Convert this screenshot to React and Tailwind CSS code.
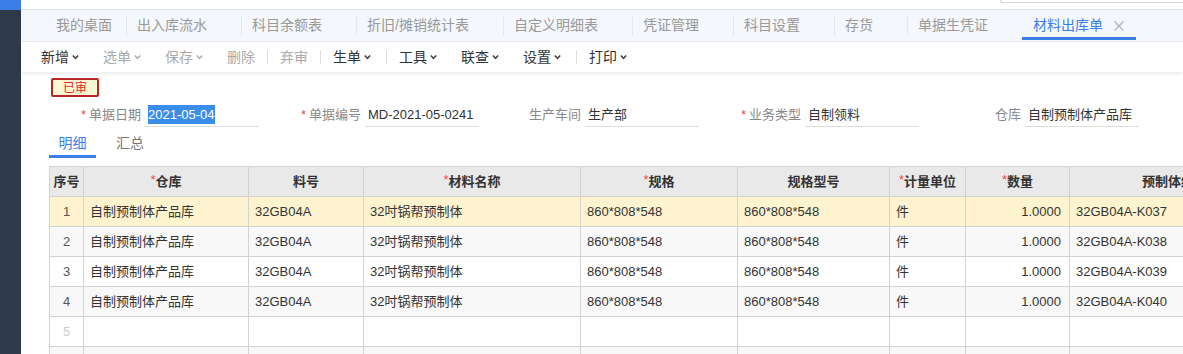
const tabs = [
  { name: '我的桌面', home: true },
  { name: '出入库流水' },
  { name: '科目余额表' },
  { name: '折旧/摊销统计表' },
  { name: '自定义明细表' },
  { name: '凭证管理' },
  { name: '科目设置' },
  { name: '存货' },
  { name: '单据生凭证' },
  { name: '材料出库单', active: true },
];

// sep: a | divider after the item
const tools = [
  { name: '新增', menu: true },
  { name: '选单', menu: true, off: true },
  { name: '保存', menu: true, off: true },
  { name: '删除', off: true, sep: true },
  { name: '弃审', off: true, sep: true },
  { name: '生单', menu: true, sep: true },
  { name: '工具', menu: true },
  { name: '联查', menu: true },
  { name: '设置', menu: true, sep: true },
  { name: '打印', menu: true },
];

const fields = [
  { label: '单据日期', value: '2021-05-04', req: true, selected: true },
  { label: '单据编号', value: 'MD-2021-05-0241', req: true },
  { label: '生产车间', value: '生产部' },
  { label: '业务类型', value: '自制领料', req: true },
  { label: '仓库', value: '自制预制体产品库' },
];

const cols = [
  { title: '序号', w: 34 },
  { title: '仓库', w: 165, req: true },
  { title: '料号', w: 115 },
  { title: '材料名称', w: 217, req: true },
  { title: '规格', w: 157, req: true },
  { title: '规格型号', w: 152 },
  { title: '计量单位', w: 76, req: true },
  { title: '数量', w: 104, req: true },
  { title: '预制体编号', w: 210 },
];

const rows = ['K037', 'K038', 'K039', 'K040'].map((k) => [
  '自制预制体产品库',
  '32GB04A',
  '32吋锅帮预制体',
  '860*808*548',
  '860*808*548',
  '件',
  '1.0000',
  '32GB04A-' + k,
]);

function Chevron({ off }) {
  return (
    <svg width="7" height="6" viewBox="0 0 7 6" className={off ? 'text-[#b0b0b0]' : 'text-[#444]'}>
      <path d="M0.8 1.5l2.7 2.8 2.7-2.8" fill="none" stroke="currentColor" strokeWidth="1.6" />
    </svg>
  );
}

function rowBg(i) {
  if (i === 0) return 'bg-[#fdf3cf]';
  return i % 2 === 1 ? 'bg-[#f8f8f8]' : 'bg-white';
}

export default function App() {
  return (
    <div className="flex h-[354px] w-[1183px] overflow-hidden bg-white font-['Liberation_Sans','Noto_Sans_CJK_SC',sans-serif]">
      {/* side rail */}
      <div className="flex w-[21px] shrink-0 flex-col bg-[#2e3a49]">
        <div className="h-[10px] shrink-0 bg-[#3b7ee8]" />
      </div>

      <div className="flex min-w-0 flex-1 flex-col">
        <div className="flex h-[10px] shrink-0 justify-end border-b border-[#e2e6ec]">
          <div className="h-[3px] w-[183px] rounded-bl-[3px] border-b border-l border-[#d4d4d4]" />
        </div>

        {/* page tabs */}
        <div className="flex h-[32px] shrink-0 items-stretch border-b border-[#e3e7ee] bg-[#f4f7fb] pl-[24px] text-[14px]">
          {tabs.map((t, i) => (
            <div
              key={t.name}
              className={`relative flex items-center ${t.home ? 'pl-[11px] pr-[14px]' : 'pl-[11px]'} ${
                !t.active && !t.home ? 'pr-[34px]' : ''
              } ${t.active ? 'pr-[11px] text-[#3d7ee6]' : 'text-[#999]'}`}
            >
              {i > 0 && !t.active && <div className="absolute left-0 top-[6px] h-[20px] w-px bg-[#e4e8ee]" />}
              <span>{t.name}</span>
              {t.active && (
                <svg width="12" height="12" viewBox="0 0 12 12" className="ml-[10px] text-[#b5b5b5]">
                  <path d="M1.5 1.5l9 9M10.5 1.5l-9 9" stroke="currentColor" strokeWidth="1.4" />
                </svg>
              )}
              {t.active && <div className="absolute bottom-[1px] left-0 right-0 h-[3px] bg-[#3d7ee6]" />}
            </div>
          ))}
        </div>

        {/* toolbar */}
        <div className="flex h-[30px] shrink-0 items-center pl-[8px] text-[14px] shadow-[0_2px_3px_rgba(0,0,0,0.08)]">
          {tools.map((t) => (
            <div key={t.name} className="flex items-center">
              <div
                className={`flex items-center gap-[3px] pl-[12px] ${t.menu && t.sep ? 'pr-[15px]' : 'pr-[12px]'} ${
                  t.off ? 'text-[#aaa]' : 'text-[#333]'
                }`}
              >
                <span>{t.name}</span>
                {t.menu && <Chevron off={t.off} />}
              </div>
              {t.sep && <div className="h-[14px] w-px bg-[#ddd]" />}
            </div>
          ))}
        </div>

        {/* status badge */}
        <div className="ml-[30px] mt-[6px] flex h-[19px] w-[48px] shrink-0 items-center justify-center rounded-[2px] border-2 border-[#b8262a] bg-[#fff6d2] text-[12px] leading-none text-[#e0262c]">
          已审
        </div>

        {/* header fields */}
        <div className="ml-[18px] mt-[6px] flex h-[24px] shrink-0 text-[13px]">
          {fields.map((f) => (
            <div key={f.label} className="flex w-[220px] shrink-0 items-stretch">
              <div className="flex w-[106px] items-center justify-end pr-[4px] text-[#888]">
                {f.req && <span className="mr-[3px] text-[#f04848]">*</span>}
                {f.label}
              </div>
              <div className="flex w-[114px] items-center border-b border-[#dedede] pl-[3px] text-[#333]">
                {f.selected ? <span className="bg-[#3a8ee9] text-white">{f.value}</span> : f.value}
              </div>
            </div>
          ))}
        </div>

        {/* detail / summary */}
        <div className="ml-[28px] mt-[2px] flex h-[29px] shrink-0 items-stretch text-[14px]">
          <div className="flex w-[47px] items-center justify-center border-b-[3px] border-[#3d7ee6] pt-[2px] text-[#3d7ee6]">
            明细
          </div>
          <div className="ml-[20px] flex items-center border-b-[3px] border-transparent pt-[2px] text-[#777]">汇总</div>
        </div>

        {/* lines */}
        <div className="ml-[28px] mt-[8px] shrink-0">
          <table className="table-fixed border-collapse text-[13px] text-[#333]" style={{ width: 1230 }}>
            <colgroup>
              {cols.map((c) => (
                <col key={c.title} style={{ width: c.w }} />
              ))}
            </colgroup>
            <thead>
              <tr className="h-[30px] bg-[#e9e9e9]">
                {cols.map((c) => (
                  <th key={c.title} className="whitespace-nowrap border border-[#d2d2d2] px-0 font-bold text-[#333]">
                    {c.req && <span className="relative -top-[2px] font-normal text-[#f04848]">*</span>}
                    {c.title}
                  </th>
                ))}
              </tr>
            </thead>
            <tbody>
              {rows.map((r, i) => (
                <tr key={i} className={`h-[30px] ${rowBg(i)}`}>
                  <td className="border border-[#d2d2d2] text-center text-[#555]">{i + 1}</td>
                  {r.map((v, j) => (
                    <td
                      key={j}
                      className={`whitespace-nowrap border border-[#d2d2d2] ${j === 6 ? 'pr-[8px] text-right' : 'pl-[6px]'}`}
                    >
                      {v}
                    </td>
                  ))}
                  <td className="border border-[#d2d2d2]" />
                </tr>
              ))}
              <tr className="h-[30px] bg-white">
                <td className="border border-[#d2d2d2] text-center text-[#ccc]">5</td>
                {cols.slice(1).map((c) => (
                  <td key={c.title} className="border border-[#d2d2d2]" />
                ))}
              </tr>
              <tr className="h-[30px] bg-[#f8f8f8]">
                {cols.map((c) => (
                  <td key={c.title} className="border border-[#d2d2d2]" />
                ))}
              </tr>
            </tbody>
          </table>
        </div>
      </div>
    </div>
  );
}
